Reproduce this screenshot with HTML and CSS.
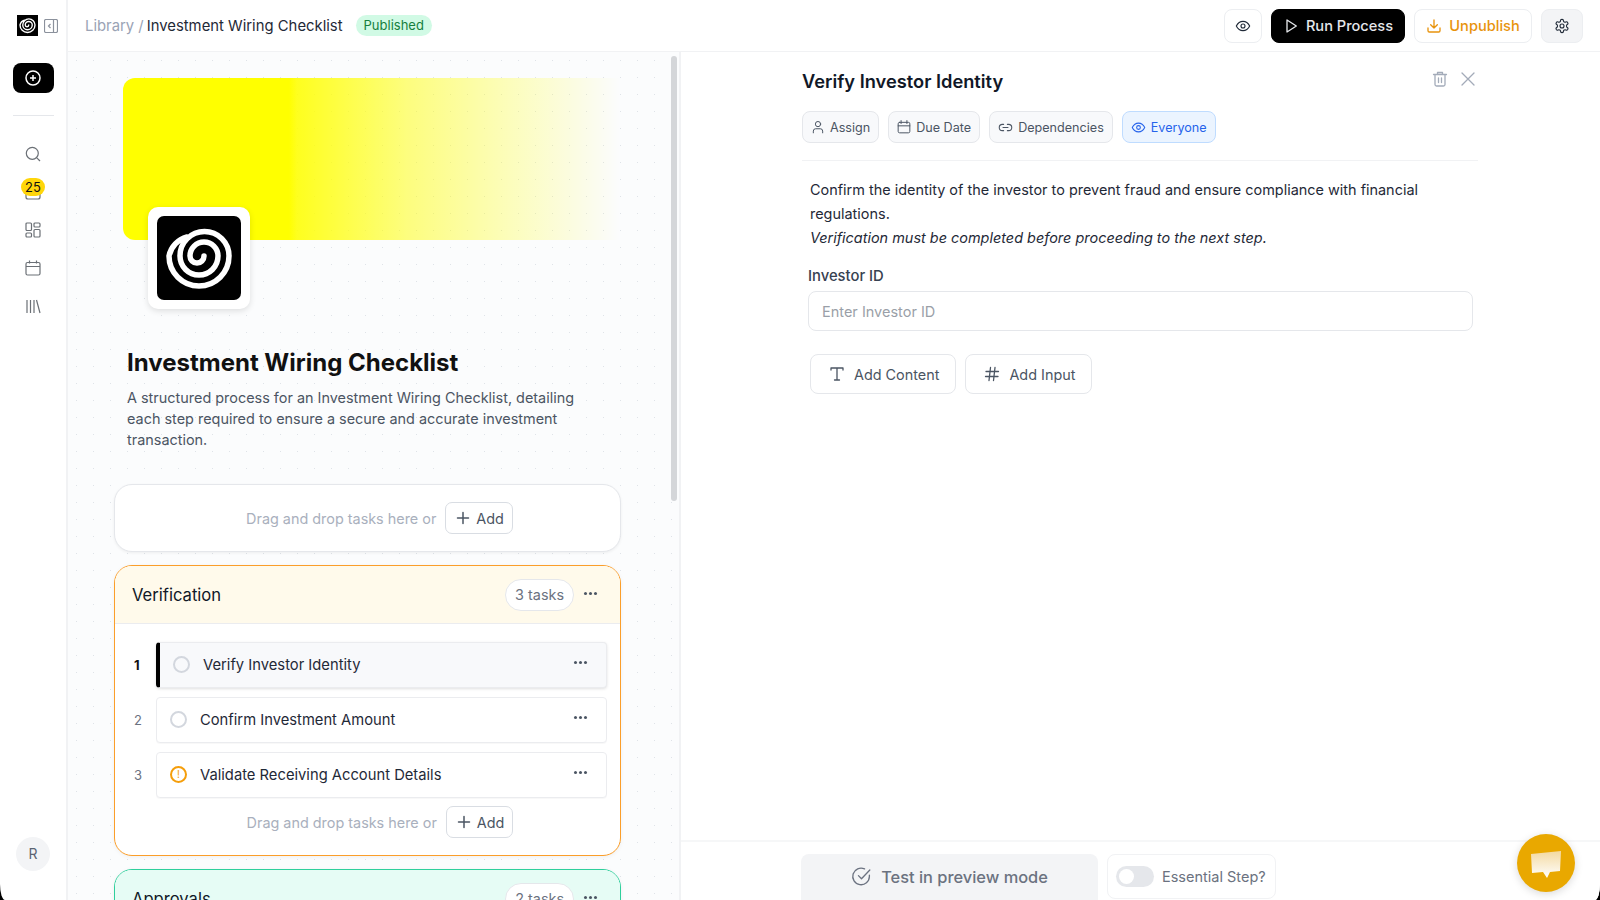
FILE: index.html
```html
<!DOCTYPE html>
<html lang="en">
<head>
<meta charset="UTF-8">
<meta name="viewport" content="width=device-width, initial-scale=1.0">
<title>Investment Wiring Checklist</title>
<link rel="stylesheet" href="styles.css">
</head>
<body>

<div class="app">

    <!-- left rail -->
    <div class="sidebar">
        <div class="side-top">
            <div class="logo-small">
                <svg viewBox="0 0 84 84" width="21" height="21"><path class="spiral" d="M47 40A7 7 0 0 1 33 40A14 14 0 0 1 61 40A19 19 0 0 1 23 40A24.5 24.5 0 0 1 72 40A30 30 0 0 1 12 40A25 25 0 0 1 30 21"/></svg>
            </div>
            <svg class="icon-collapse" viewBox="0 0 14 14" width="14" height="14"><rect x="0.5" y="0.5" width="13" height="13" rx="1.5"/><path d="M9.5 0.5V13.5M6.5 5L4.5 7L6.5 9"/></svg>
        </div>
        <div class="new-btn">
            <svg viewBox="0 0 16 16" width="16" height="16"><circle cx="8" cy="8" r="7"/><path d="M8 5V11M5 8H11"/></svg>
        </div>
        <div class="side-line"></div>
        <div class="side-icons">
            <svg class="side-icon" viewBox="0 0 16 16"><circle cx="7.3" cy="7.3" r="6"/><path d="M11.8 11.8L15 15"/></svg>
            <div class="inbox">
                <svg class="side-icon" viewBox="0 0 16 16"><path d="M1 8V13A2 2 0 0 0 3 15H13A2 2 0 0 0 15 13V8"/></svg>
                <span class="inbox-badge">25</span>
            </div>
            <svg class="side-icon" viewBox="0 0 16 16"><rect x="1" y="1" width="5.5" height="7.5" rx="1"/><rect x="9" y="1" width="6" height="4" rx="1"/><rect x="9" y="7.5" width="6" height="7.5" rx="1"/><rect x="1" y="11" width="5.5" height="4" rx="1"/></svg>
            <svg class="side-icon" viewBox="0 0 16 16"><rect x="1" y="2.5" width="14" height="12.5" rx="1.5"/><path d="M1 6.5H15M4.5 0.5V3.5M11.5 0.5V3.5"/></svg>
            <svg class="side-icon" viewBox="0 0 16 16"><path d="M2 2V15M5.5 2V15M9 2V15M11.5 2L15 15"/></svg>
        </div>
        <div class="avatar">R</div>
    </div>

    <div class="main">

        <div class="topbar">
            <div class="crumbs">
                <span class="crumb-muted">Library /</span>
                <span class="crumb-title">Investment Wiring Checklist</span>
                <span class="pill-published">Published</span>
            </div>
            <div class="top-actions">
                <button class="top-btn btn-eye">
                    <svg class="ico" viewBox="0 0 24 24" width="16" height="16"><path d="M2 12S5.5 5 12 5S22 12 22 12S18.5 19 12 19S2 12 2 12Z"/><circle cx="12" cy="12" r="3"/></svg>
                </button>
                <button class="top-btn btn-run">
                    <svg class="ico" viewBox="0 0 24 24" width="16" height="16"><path d="M6 3L20 12L6 21Z"/></svg>
                    Run Process
                </button>
                <button class="top-btn btn-unpublish">
                    <svg class="ico" viewBox="0 0 24 24" width="16" height="16"><path d="M21 15V19A2 2 0 0 1 19 21H5A2 2 0 0 1 3 19V15M7 10L12 15L17 10M12 15V3"/></svg>
                    Unpublish
                </button>
                <button class="top-btn btn-gear">
                    <svg class="ico" viewBox="0 0 24 24" width="16" height="16"><path d="M12.2 2H11.8A2 2 0 0 0 9.8 4V4.2A2 2 0 0 1 8.8 5.9L8.4 6.1A2 2 0 0 1 6.4 6.1L6.2 6A2 2 0 0 0 3.5 6.7L3.3 7.1A2 2 0 0 0 4 9.8L4.2 9.9A2 2 0 0 1 5.2 11.6V12.4A2 2 0 0 1 4.2 14.1L4 14.2A2 2 0 0 0 3.3 16.9L3.5 17.3A2 2 0 0 0 6.2 18L6.4 17.9A2 2 0 0 1 8.4 17.9L8.8 18.1A2 2 0 0 1 9.8 19.8V20A2 2 0 0 0 11.8 22H12.2A2 2 0 0 0 14.2 20V19.8A2 2 0 0 1 15.2 18.1L15.6 17.9A2 2 0 0 1 17.6 17.9L17.8 18A2 2 0 0 0 20.5 17.3L20.7 16.9A2 2 0 0 0 20 14.2L19.8 14.1A2 2 0 0 1 18.8 12.4V11.6A2 2 0 0 1 19.8 9.9L20 9.8A2 2 0 0 0 20.7 7.1L20.5 6.7A2 2 0 0 0 17.8 6L17.6 6.1A2 2 0 0 1 15.6 6.1L15.2 5.9A2 2 0 0 1 14.2 4.2V4A2 2 0 0 0 12.2 2Z"/><circle cx="12" cy="12" r="3"/></svg>
                </button>
            </div>
        </div>

        <div class="split">

            <div class="left-panel">
                <div class="scroll-thumb"></div>
                <div class="banner"></div>
                <div class="logo-box">
                    <div class="logo-inner">
                        <svg viewBox="0 0 84 84" width="84" height="84"><path class="spiral" d="M47 40A7 7 0 0 1 33 40A14 14 0 0 1 61 40A19 19 0 0 1 23 40A24.5 24.5 0 0 1 72 40A30 30 0 0 1 12 40A25 25 0 0 1 30 21"/></svg>
                    </div>
                </div>
                <h1 class="doc-title">Investment Wiring Checklist</h1>
                <p class="doc-desc">A structured process for an Investment Wiring Checklist, detailing each step required to ensure a secure and accurate investment transaction.</p>

                <div class="drop-box">
                    <span class="drop-text">Drag and drop tasks here or</span>
                    <button class="add-btn">
                        <svg class="ico" viewBox="0 0 14 14" width="14" height="14"><path d="M7 1.5V12.5M1.5 7H12.5"/></svg>
                        Add
                    </button>
                </div>

                <div class="group group-orange">
                    <div class="group-head">
                        <span class="group-name">Verification</span>
                        <span class="group-count">3 tasks</span>
                        <span class="dots head-dots"><i></i><i></i><i></i></span>
                    </div>
                    <div class="group-body">
                        <div class="task-row">
                            <span class="task-num num-active">1</span>
                            <div class="task task-active">
                                <span class="task-ring"></span>
                                <span class="task-name">Verify Investor Identity</span>
                                <span class="dots"><i></i><i></i><i></i></span>
                            </div>
                        </div>
                        <div class="task-row">
                            <span class="task-num">2</span>
                            <div class="task">
                                <span class="task-ring"></span>
                                <span class="task-name">Confirm Investment Amount</span>
                                <span class="dots"><i></i><i></i><i></i></span>
                            </div>
                        </div>
                        <div class="task-row">
                            <span class="task-num">3</span>
                            <div class="task">
                                <span class="task-ring ring-warn">!</span>
                                <span class="task-name">Validate Receiving Account Details</span>
                                <span class="dots"><i></i><i></i><i></i></span>
                            </div>
                        </div>
                        <div class="group-drop">
                            <span class="drop-text">Drag and drop tasks here or</span>
                            <button class="add-btn">
                                <svg class="ico" viewBox="0 0 14 14" width="14" height="14"><path d="M7 1.5V12.5M1.5 7H12.5"/></svg>
                                Add
                            </button>
                        </div>
                    </div>
                </div>

                <div class="group group-green">
                    <div class="group-head">
                        <span class="group-name">Approvals</span>
                        <span class="group-count">2 tasks</span>
                        <span class="dots head-dots"><i></i><i></i><i></i></span>
                    </div>
                </div>
            </div>

            <div class="right-panel">
                <div class="detail">
                    <div class="detail-head">
                        <h2 class="detail-title">Verify Investor Identity</h2>
                        <svg class="ico head-ico" viewBox="0 0 16 16" width="16" height="16"><path d="M1.5 3.5H14.5M5.5 3.5V1.5H10.5V3.5M3 3.5V13.5A1.5 1.5 0 0 0 4.5 15H11.5A1.5 1.5 0 0 0 13 13.5V3.5M6.5 7V11.5M9.5 7V11.5"/></svg>
                        <svg class="ico head-ico" viewBox="0 0 16 16" width="16" height="16"><path d="M2 2L14 14M14 2L2 14"/></svg>
                    </div>
                    <div class="chips">
                        <span class="chip">
                            <svg class="ico" viewBox="0 0 24 24" width="14" height="14"><circle cx="12" cy="7" r="4.5"/><path d="M4 22V19A4 4 0 0 1 8 15H16A4 4 0 0 1 20 19V22"/></svg>
                            Assign
                        </span>
                        <span class="chip">
                            <svg class="ico" viewBox="0 0 24 24" width="14" height="14"><rect x="2" y="4" width="20" height="18" rx="2.5"/><path d="M2 10H22M7 1V6M17 1V6"/></svg>
                            Due Date
                        </span>
                        <span class="chip">
                            <svg class="ico" viewBox="0 0 24 24" width="15" height="15"><path d="M9 17H7A5 5 0 0 1 7 7H9M15 7H17A5 5 0 0 1 17 17H15M8 12H16"/></svg>
                            Dependencies
                        </span>
                        <span class="chip chip-blue">
                            <svg class="ico" viewBox="0 0 24 24" width="15" height="15"><path d="M2 12S5.5 5 12 5S22 12 22 12S18.5 19 12 19S2 12 2 12Z"/><circle cx="12" cy="12" r="3"/></svg>
                            Everyone
                        </span>
                    </div>
                    <div class="detail-text">
                        <p>Confirm the identity of the investor to prevent fraud and ensure compliance with financial regulations.</p>
                        <p><em>Verification must be completed before proceeding to the next step.</em></p>
                    </div>
                    <div class="field">
                        <label class="field-label" for="investorId">Investor ID</label>
                        <input class="field-input" type="text" id="investorId" placeholder="Enter Investor ID">
                    </div>
                    <div class="add-row">
                        <button class="block-btn">
                            <svg class="ico" viewBox="0 0 16 16" width="16" height="16"><path d="M2 4V2H14V4M8 2V14M5.5 14H10.5"/></svg>
                            Add Content
                        </button>
                        <button class="block-btn">
                            <svg class="ico" viewBox="0 0 16 16" width="16" height="16"><path d="M2 5.5H14.5M1.5 10.5H14M6.5 1.5L5 14.5M11 1.5L9.5 14.5"/></svg>
                            Add Input
                        </button>
                    </div>
                </div>
                <div class="detail-foot">
                    <button class="preview-btn">
                        <svg class="ico" viewBox="0 0 24 24" width="21" height="21"><path d="M21 10.5V12A9.5 9.5 0 1 1 15.5 3.3M8.5 11L12 14.5L21.5 4.5"/></svg>
                        Test in preview mode
                    </button>
                    <div class="essential">
                        <span class="toggle"><span class="toggle-knob"></span></span>
                        <span class="essential-text">Essential Step?</span>
                    </div>
                </div>
            </div>
        </div>
    </div>
</div>

<div class="chat-bubble">
    <svg viewBox="0 0 32 30" width="32" height="30">
        <defs><linearGradient id="chatFill" x1="0" y1="0" x2="0" y2="1"><stop offset="0" stop-color="#f3d9a0"/><stop offset="1" stop-color="#fff"/></linearGradient></defs>
        <path d="M1 4L31 1L30 21L20 22L17 28L13 22L2 23Z" fill="url(#chatFill)"/>
    </svg>
</div>

</body>
</html>
```

FILE: styles.css
```css
* {
    box-sizing: border-box;
}
html, body {
    height: 100%;
}
body {
    margin: 0;
    background-color: #000;
    font-family: Inter, "Liberation Sans", sans-serif;
    color: #111827;
    overflow: hidden;
}
button {
    font-family: inherit;
    cursor: pointer;
}
.ico {
    fill: none;
    stroke: currentColor;
    stroke-width: 2;
    stroke-linecap: round;
    stroke-linejoin: round;
    flex-shrink: 0;
}
.spiral {
    fill: none;
    stroke: #fff;
    stroke-width: 5.5;
    stroke-linecap: round;
}

.app {
    display: flex;
    height: 900px;
    background-color: #fff;
    border-radius: 0 0 5px 5px / 0 0 16px 16px;
    overflow: hidden;
}

/* left rail */
.sidebar {
    width: 68px;
    flex-shrink: 0;
    border-right: 2px solid #f1f2f4;
    display: flex;
    flex-direction: column;
    align-items: center;
    padding: 15px 0 29px;
}
.side-top {
    display: flex;
    align-items: center;
    gap: 6px;
    margin-left: 8px;
}
.logo-small {
    width: 21px;
    height: 21px;
    background-color: #000;
    display: flex;
}
.icon-collapse {
    fill: none;
    stroke: #8b919c;
    stroke-width: 1.2;
}
.new-btn {
    width: 41px;
    height: 30px;
    margin-top: 27px;
    background-color: #000;
    border-radius: 8px;
    color: #fff;
    display: flex;
    align-items: center;
    justify-content: center;
}
.new-btn svg {
    fill: none;
    stroke: #fff;
    stroke-width: 1.5;
}
.side-line {
    width: 41px;
    height: 1px;
    margin-top: 22px;
    background-color: #e5e7eb;
}
.side-icons {
    display: flex;
    flex-direction: column;
    align-items: center;
    gap: 22px;
    margin-top: 30px;
    flex: 1;
}
.side-icon {
    display: block;
    width: 16px;
    height: 16px;
    fill: none;
    stroke: #6b7076;
    stroke-width: 1.2;
}
.inbox {
    position: relative;
    width: 16px;
    height: 16px;
}
.inbox-badge {
    position: absolute;
    left: -4px;
    top: -6px;
    width: 24px;
    height: 18px;
    border-radius: 9px;
    background-color: #ffd60a;
    font-size: 13px;
    line-height: 18px;
    text-align: center;
    color: #111;
}
.avatar {
    width: 34px;
    height: 34px;
    border-radius: 50%;
    background-color: #f3f4f6;
    font-size: 14px;
    line-height: 34px;
    text-align: center;
    color: #5b6472;
}

.main {
    flex: 1;
    min-width: 0;
    display: flex;
    flex-direction: column;
}

/* top bar */
.topbar {
    height: 52px;
    flex-shrink: 0;
    border-bottom: 1px solid #f1f2f4;
    display: flex;
    align-items: center;
    justify-content: space-between;
    padding: 0 17px;
}
.crumbs {
    display: flex;
    align-items: center;
    font-size: 14.85px;
}
.crumb-muted {
    color: #9aa3b5;
    margin-right: 3px;
}
.crumb-title {
    color: #1f2937;
}
.pill-published {
    margin-left: 13px;
    height: 21px;
    padding: 0 8px;
    border-radius: 11px;
    background-color: #d1fae5;
    color: #15803d;
    font-size: 13px;
    line-height: 21px;
}
.top-actions {
    display: flex;
    gap: 9px;
}
.top-btn {
    height: 34px;
    border-radius: 8px;
    border: 1px solid #eceef1;
    background-color: #fff;
    display: flex;
    align-items: center;
    justify-content: center;
    gap: 7px;
    font-size: 14.6px;
    font-weight: 500;
    padding: 0;
}
.btn-eye {
    width: 38px;
    color: #1f2937;
}
.btn-run {
    width: 134px;
    background-color: #000;
    border-color: #000;
    color: #e5e7eb;
}
.btn-unpublish {
    width: 118px;
    color: #e8930c;
}
.btn-gear {
    width: 42px;
    background-color: #f3f4f6;
    color: #1f2937;
}
.btn-gear svg, .btn-eye svg {
    stroke-width: 1.7;
}

.split {
    flex: 1;
    min-height: 0;
    display: flex;
}

/* left panel */
.left-panel {
    position: relative;
    width: 613px;
    flex-shrink: 0;
    padding: 26px 0 0 46px;
    border-right: 2px solid #f1f2f4;
    background-color: #fbfcfd;
    background-image: radial-gradient(#dfe3e8 0.8px, transparent 1px);
    background-size: 17px 17px;
    overflow: hidden;
}
.scroll-thumb {
    position: absolute;
    right: 2px;
    top: 4px;
    width: 6px;
    height: 445px;
    border-radius: 3px;
    background-color: #d4d6d9;
}
.banner {
    width: 497px;
    height: 162px;
    margin-left: 9px;
    border-radius: 12px 0 0 12px;
    background: linear-gradient(to right, #ffff00 0, #ffff00 166px, rgba(255, 255, 0, 0.88) 174px, rgba(255, 255, 0, 0.5) 284px, rgba(255, 255, 0, 0) 100%);
}
.logo-box {
    width: 102px;
    height: 102px;
    margin: -33px 0 0 34px;
    position: relative;
    padding: 9px;
    border-radius: 10px;
    background-color: #fff;
    box-shadow: 0 2px 6px rgba(0, 0, 0, 0.12);
}
.logo-inner {
    width: 84px;
    height: 84px;
    background-color: #000;
    border-radius: 7px;
}
.doc-title {
    margin: 37px 0 0 13px;
    font-size: 24px;
    line-height: 34px;
    font-weight: 700;
    color: #111;
}
.doc-desc {
    width: 470px;
    margin: 7px 0 0 13px;
    font-size: 14.43px;
    line-height: 21px;
    color: #4b5563;
}
.drop-box {
    width: 507px;
    height: 68px;
    margin-top: 34px;
    padding-left: 24px;
    border: 1px solid #e5e7eb;
    border-radius: 18px;
    background-color: #fff;
    box-shadow: 0 1px 3px rgba(0, 0, 0, 0.06);
    display: flex;
    align-items: center;
    justify-content: center;
    gap: 9px;
}
.drop-text {
    font-size: 14.4px;
    color: #a9b0bd;
}
.add-btn {
    height: 32px;
    padding: 0 8px 0 10px;
    border: 1px solid #d9dde3;
    border-radius: 7px;
    background-color: #fff;
    color: #4b5563;
    font-size: 14.4px;
    display: flex;
    align-items: center;
    gap: 6px;
}
.add-btn svg {
    stroke-width: 1.5;
}
.group {
    width: 507px;
    margin-top: 13px;
    border-radius: 18px;
    border: 1.5px solid;
    background-color: #fff;
    overflow: hidden;
    box-shadow: 0 1px 4px rgba(0, 0, 0, 0.05);
}
.group-orange {
    border-color: #fb9e2a;
}
.group-orange .group-head {
    background-color: #fffaeb;
}
.group-green {
    border-color: #2fcf9c;
}
.group-green .group-head {
    background-color: #e6fcf5;
}
.group-head {
    height: 58px;
    display: flex;
    align-items: center;
    padding: 0 23px 0 17px;
    border-bottom: 1px solid #ebecef;
}
.group-name {
    flex: 1;
    font-size: 16.6px;
    color: #111827;
}
.group-count {
    height: 32px;
    padding: 0 9px;
    border: 1px solid #e5e7eb;
    border-radius: 16px;
    background-color: #fff;
    color: #6b7280;
    font-size: 14.4px;
    line-height: 30px;
}
.dots {
    display: flex;
    gap: 2px;
    margin-top: -3px;
}
.dots i {
    width: 3px;
    height: 3px;
    border-radius: 50%;
    background-color: #4b5563;
}
.head-dots {
    margin-left: 10px;
}
.group-body {
    padding: 18px 13px 17px 0;
}
.task-row {
    display: flex;
    align-items: center;
    height: 46px;
    margin-bottom: 9px;
}
.task-num {
    width: 41px;
    padding-left: 19px;
    font-size: 13px;
    color: #6b7280;
}
.num-active {
    font-weight: 700;
    color: #111;
}
.task {
    flex: 1;
    height: 46px;
    border: 1px solid #ebecef;
    border-radius: 4px;
    background-color: #fff;
    display: flex;
    align-items: center;
    padding: 0 19px 2px 13px;
    box-shadow: 0 1px 1px rgba(0, 0, 0, 0.03);
}
.task-active {
    border-left: 4px solid #000;
    background-color: #f8f9fb;
    box-shadow: 0 1px 3px rgba(0, 0, 0, 0.12);
}
.task-ring {
    width: 17px;
    height: 17px;
    border: 2px solid #d3d7de;
    border-radius: 50%;
    flex-shrink: 0;
    font-size: 10px;
    line-height: 13px;
    text-align: center;
}
.ring-warn {
    border-color: #f59e0b;
    color: #f59e0b;
}
.task-name {
    flex: 1;
    margin: 2px 0 0 13px;
    font-size: 14.75px;
    color: #1f2937;
}
.group-drop {
    display: flex;
    align-items: center;
    justify-content: center;
    gap: 9px;
    margin-top: -1px;
    padding-left: 38px;
}

/* right panel */
.right-panel {
    flex: 1;
    min-width: 0;
    display: flex;
    flex-direction: column;
    background-color: #fff;
}
.detail {
    flex: 1;
    width: 676px;
    margin-left: 121px;
}
.detail-head {
    display: flex;
    align-items: center;
    height: 59px;
    padding-right: 2px;
    gap: 12px;
}
.detail-title {
    flex: 1;
    margin: -2px 0 0;
    font-size: 18.25px;
    font-weight: 600;
    color: #111827;
}
.head-ico {
    color: #a3abb9;
    stroke-width: 1.3;
    margin-top: -5px;
}
.chips {
    display: flex;
    gap: 9px;
    padding-bottom: 17px;
    border-bottom: 1px solid #f1f2f4;
}
.chip {
    height: 32px;
    padding: 0 8px;
    border: 1px solid #e5e7eb;
    border-radius: 8px;
    background-color: #f8f9fb;
    color: #4b5563;
    font-size: 12.6px;
    display: flex;
    align-items: center;
    gap: 5px;
}
.chip svg {
    stroke-width: 1.7;
}
.chip-blue {
    background-color: #ebf4ff;
    border-color: #bfdcff;
    color: #2563eb;
}
.detail-text {
    padding: 17px 0 0 8px;
    font-size: 14.45px;
    line-height: 24px;
    color: #1f2937;
}
.detail-text p {
    margin: 0;
}
.field {
    margin: 14px 5px 0 6px;
}
.field-label {
    display: block;
    font-size: 14.8px;
    font-weight: 500;
    line-height: 24px;
    color: #374151;
}
.field-input {
    display: block;
    width: 100%;
    height: 40px;
    margin-top: 3px;
    padding: 0 13px;
    border: 1px solid #e5e7eb;
    border-radius: 8px;
    font-family: inherit;
    font-size: 14.5px;
}
.field-input::placeholder {
    color: #9a9fa8;
}
.add-row {
    display: flex;
    gap: 9px;
    margin: 23px 0 0 8px;
}
.block-btn {
    height: 40px;
    padding: 0 16px 0 18px;
    border: 1px solid #e5e7eb;
    border-radius: 8px;
    background-color: #fff;
    color: #4b5563;
    font-size: 14.4px;
    display: flex;
    align-items: center;
    gap: 9px;
}
.block-btn svg {
    stroke-width: 1.3;
}
.detail-foot {
    height: 60px;
    flex-shrink: 0;
    border-top: 2px solid #f6f7f8;
    padding: 12px 0 0 120px;
    display: flex;
    gap: 9px;
}
.preview-btn {
    width: 297px;
    height: 47px;
    padding: 0 0 2px;
    border: 0;
    border-radius: 8px 8px 0 0;
    background-color: #f3f4f6;
    color: #6b7280;
    font-size: 16.4px;
    font-weight: 500;
    display: flex;
    align-items: center;
    justify-content: center;
    gap: 9px;
}
.preview-btn svg {
    stroke-width: 1.5;
}
.essential {
    width: 169px;
    height: 45px;
    border: 1px solid #f1f2f4;
    border-radius: 8px;
    display: flex;
    align-items: center;
    gap: 8px;
    padding-left: 8px;
}
.toggle {
    width: 38px;
    height: 21px;
    border-radius: 11px;
    background-color: #e5e7eb;
    padding: 3px;
}
.toggle-knob {
    display: block;
    width: 15px;
    height: 15px;
    border-radius: 50%;
    background-color: #fff;
}
.essential-text {
    font-size: 14.5px;
    color: #6b7280;
}

/* chat launcher */
.chat-bubble {
    position: absolute;
    left: 1517px;
    top: 834px;
    width: 58px;
    height: 58px;
    border-radius: 50%;
    background-color: #e9a800;
    box-shadow: 0 2px 8px rgba(0, 0, 0, 0.15);
    display: flex;
    align-items: center;
    justify-content: center;
    padding-top: 3px;
}
```
